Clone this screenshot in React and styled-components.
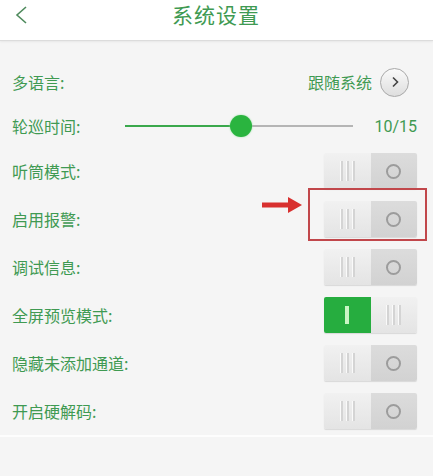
import React from 'react'
import styled, { createGlobalStyle } from 'styled-components'

const Global = createGlobalStyle`
body {
  margin: 0;
  background: #f5f5f5;
  font-family: "Noto Sans CJK SC", "Noto Sans", sans-serif;
}
`

const Page = styled.div`
width: 433px;
height: 476px;
background: #f5f5f5;
overflow: hidden;
`

const Header = styled.div`
height: 40px;
background: #fff;
border-bottom: 1px solid #dcdcdc;
box-shadow: 0 1px 2px rgba(0,0,0,0.06);
display: flex;
align-items: center;
justify-content: center;
position: relative;
`

const Back = styled.svg`
position: absolute;
left: 14px;
top: 5px;
`

const Title = styled.div`
color: #3f9a52;
font-size: 21px;
letter-spacing: 1px;
margin-left: -1px;
margin-top: -12px;
`

const List = styled.div`
padding-top: 18px;
border-bottom: 2px solid #fdfdfd;
`

const Row = styled.div`
height: ${p => p.h}px;
padding: 0 16px 0 12px;
display: flex;
align-items: center;
position: relative;
`

const Label = styled.div`
color: #3f9a52;
font-size: 16px;
flex: ${p => p.grow ? 1 : 'none'};
`

const Value = styled.div`
color: #3f9a52;
font-size: 16px;
margin-right: 8px;
`

const RoundBtn = styled.div`
width: 27px;
height: 27px;
border-radius: 50%;
border: 1px solid #a9a9a9;
background: linear-gradient(#fafafa, #dedede);
display: flex;
align-items: center;
justify-content: center;
margin-right: 8px;
`

const Slider = styled.div`
margin-left: 45px;
width: 228px;
height: 2px;
background: #b5b5b5;
position: relative;
`

const Fill = styled.div`
height: 2px;
background: #3aa84c;
`

const Thumb = styled.div`
position: absolute;
top: -10px;
width: 22px;
height: 22px;
border-radius: 50%;
background: #2ab43f;
box-shadow: 0 0 2px #8fdc9b;
`

const Count = styled.div`
margin-left: auto;
color: #3f9a52;
font-size: 16px;
font-family: Roboto, "Noto Sans", sans-serif;
`

const Switch = styled.div`
margin-left: auto;
width: 93px;
height: 36px;
display: flex;
border-radius: 2px;
overflow: hidden;
box-shadow: 0 1px 1px rgba(0,0,0,0.12);
`

const Half = styled.div`
flex: 1;
display: flex;
align-items: center;
justify-content: center;
background: ${p => p.kind === 'on' ? '#26ad3f' : p.kind === 'dark' ? 'linear-gradient(#dcdcdc, #d2d2d2)' : 'linear-gradient(#f1f1f1, #e4e4e4)'};
`

const Grip = styled.div`
display: flex;
gap: 3px;
`

const GripLine = styled.div`
width: 2px;
height: 20px;
background: #d4d4d4;
border-left: 1px solid #fafafa;
`

const Ring = styled.div`
width: 11px;
height: 11px;
border-radius: 50%;
border: 2px solid #9c9c9c;
`

const Bar = styled.div`
width: 4px;
height: 18px;
background: #c9f5c4;
`

const Mark = styled.div`
position: absolute;
right: 6px;
top: -7px;
width: 115px;
height: 49px;
border: 2px solid #c1474b;
`

const Arrow = styled.svg`
position: absolute;
left: 262px;
top: 1px;
`

const Toggle = ({ on }) => (
  <Switch>
    {on ? (
      <>
        <Half kind="on"><Bar /></Half>
        <Half><Grip><GripLine /><GripLine /><GripLine /></Grip></Half>
      </>
    ) : (
      <>
        <Half><Grip><GripLine /><GripLine /><GripLine /></Grip></Half>
        <Half kind="dark"><Ring /></Half>
      </>
    )}
  </Switch>
)

const toggles = [
  { name: '听筒模式:', on: false },
  { name: '启用报警:', on: false, marked: true },
  { name: '调试信息:', on: false },
  { name: '全屏预览模式:', on: true },
  { name: '隐藏未添加通道:', on: false },
  { name: '开启硬解码:', on: false },
]

const App = () => (
  <Page>
    <Global />
    <Header>
      <Back width="16" height="20" viewBox="0 0 16 20">
        <path d="M12 2 L3 10 L12 18" fill="none" stroke="#4e8a5c" strokeWidth="1.6" />
      </Back>
      <Title>系统设置</Title>
    </Header>
    <List>
      <Row h={46}>
        <Label grow>多语言:</Label>
        <Value>跟随系统</Value>
        <RoundBtn>
          <svg width="12" height="12" viewBox="0 0 12 12">
            <path d="M4 1.5 L8.5 6 L4 10.5" fill="none" stroke="#444" strokeWidth="1.6" />
          </svg>
        </RoundBtn>
      </Row>
      <Row h={42}>
        <Label>轮巡时间:</Label>
        <Slider>
          <Fill style={{ width: `${(10 / 15) * 100 - 16}%` }} />
          <Thumb style={{ left: `${(10 / 15) * 100 - 21}%` }} />
        </Slider>
        <Count>10/15</Count>
      </Row>
      {toggles.map(t => (
        <Row h={48} key={t.name}>
          <Label>{t.name}</Label>
          {t.marked && (
            <Arrow width="42" height="18" viewBox="0 0 42 18">
              <path d="M0 6.5 H26 V1 L40 9 L26 17 V11.5 H0 Z" fill="#d8302f" />
            </Arrow>
          )}
          <Toggle on={t.on} />
          {t.marked && <Mark />}
        </Row>
      ))}
    </List>
  </Page>
)

export default App
